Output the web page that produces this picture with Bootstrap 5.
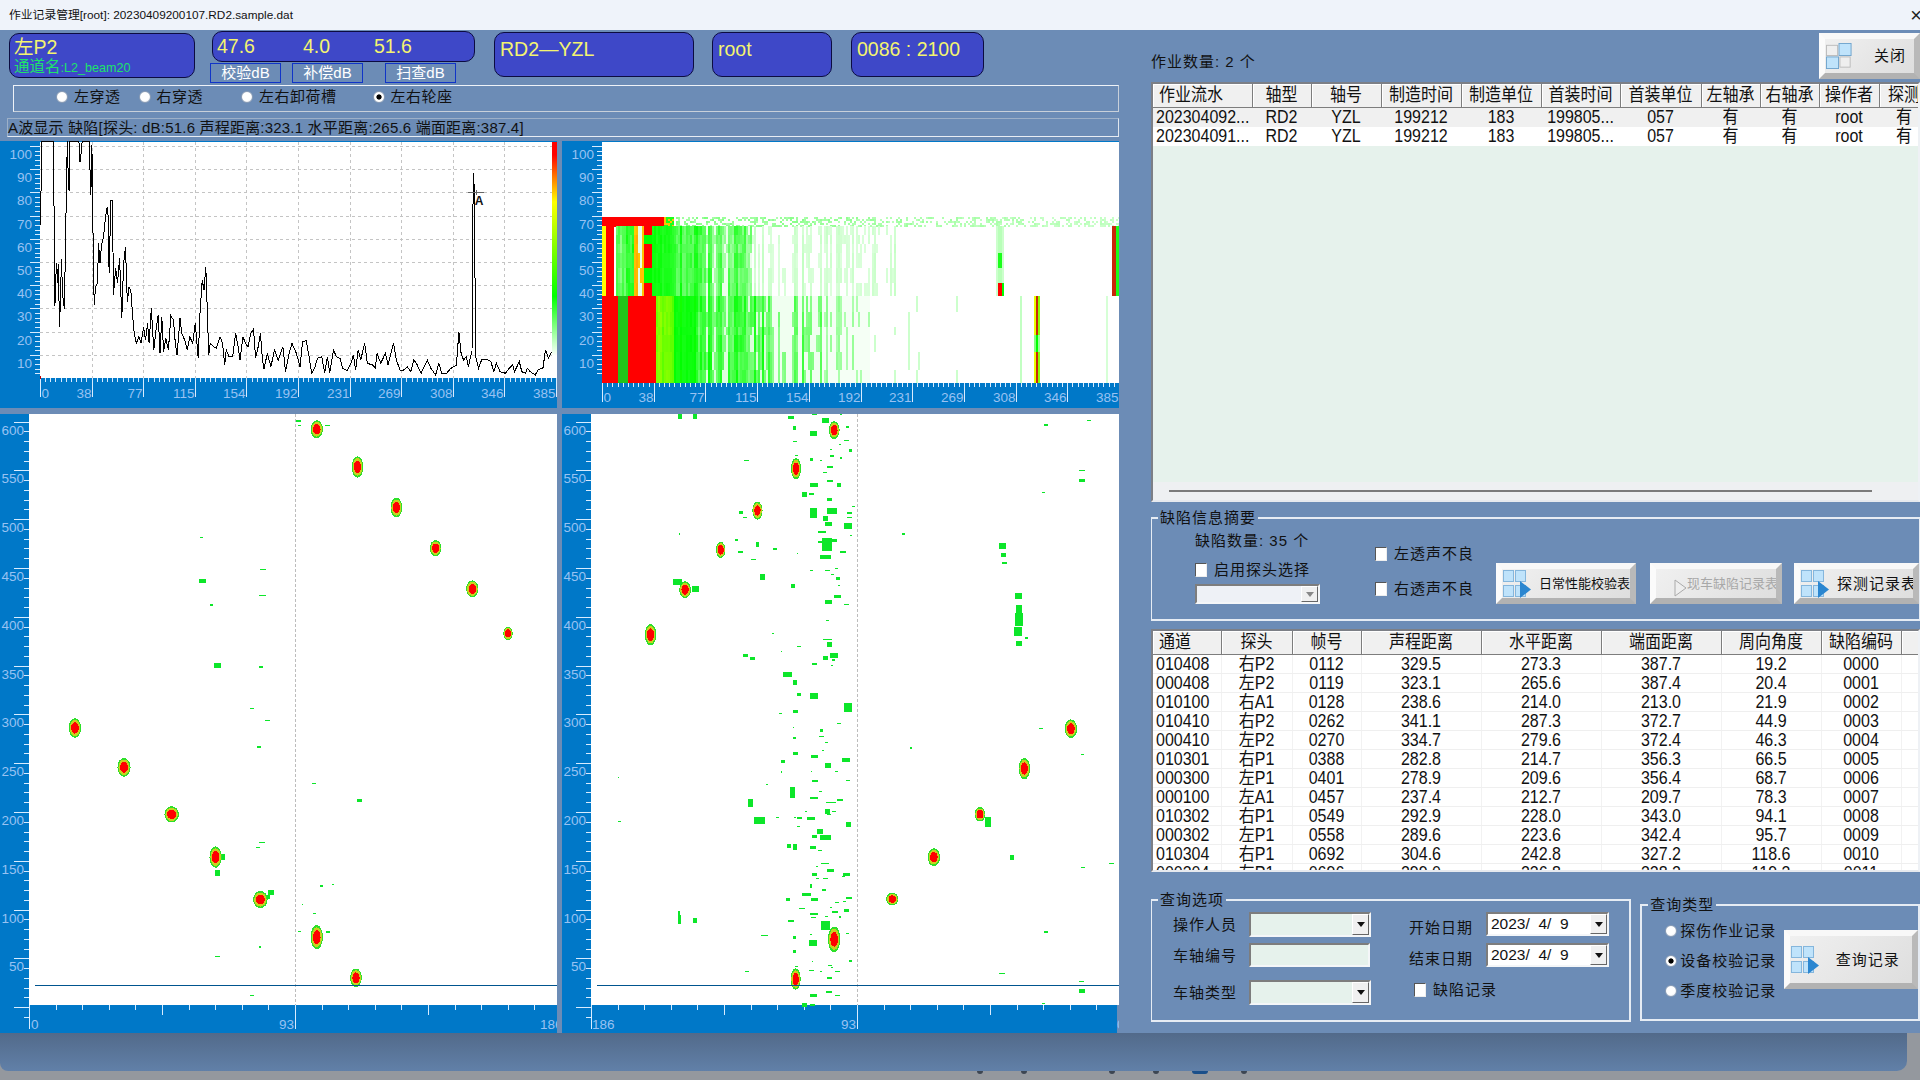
<!DOCTYPE html>
<html lang="zh-CN"><head>
    <meta charset="UTF-8">
    <title>作业记录管理[root]: 20230409200107.RD2.sample.dat</title>
    <link href="https://cdn.jsdelivr.net/npm/bootstrap@5.3.2/dist/css/bootstrap.min.css" rel="stylesheet">
    <style>
        html, body { height: 100%; overflow: hidden; }
        body { margin: 0; background: #94989e; color: #111; font-family: "Liberation Sans", "Noto Sans CJK SC", sans-serif; font-size: 15px; line-height: 1.2; }
        .cn { letter-spacing: 1px; }
        .win-title { height: 30px; background: #eff3fa; font-size: 11.8px; padding-left: 9px; }
        .win-x { margin-right: -2px; font-size: 20px; color: #222; }
        .win-body { height: 1003px; background: #6c8cb6; }
        .win-foot { height: 38px; width: 1907px; background: linear-gradient(#526a8a, #6180a8); border-radius: 0 0 10px 8px; }
        .task-strip { height: 9px; padding-left: 977px; gap: 38px; }
        .task-dot { width: 6px; height: 3px; background: #3d4652; border-radius: 0 0 3px 3px; }
        .task-dot.on { width: 16px; margin: 0 -5px; background: #1a4f8a; }

        .left-pane { width: 1119px; }
        .right-pane { width: 769px; margin-left: 32px; flex: 1 0 auto; overflow: hidden; }

        .head-row { height: 55px; }
        .lcd { background: #3e48c8; border: 1px solid #0c0c40; border-radius: 10px; color: #f4f470; font-size: 19.5px; line-height: 1; }
        .lcd-probe { width: 186px; height: 45px; margin: 3px 0 0 9px; padding: 4px 4px; }
        .lcd-probe small { display: block; font-size: 15.5px; color: #1de36a; margin-top: 1px; }
        .lcd-probe small span { font-size: 12.6px; }
        .db-col { width: 265px; margin: 1px 0 0 15px; }
        .lcd-db { width: 263px; height: 31px; margin-left: 2px; padding: 5px 4px; }
        .lcd-db span { display: inline-block; }
        .db-a { width: 86px; }
        .db-b { width: 71px; }
        .db-btn { width: 71px; height: 20px; margin-top: 1px; border: 1px solid #1034c8; color: #fff; font-size: 15px; line-height: 18px; text-align: center; }
        .db-btn + .db-btn { margin-left: 11px; }
        .db-btn:last-child { margin-left: 22px; }
        .lcd-wide { height: 45px; margin-top: 2px; padding: 7px 5px; }
        .lcd-rd { width: 200px; margin-left: 19px; }
        .lcd-user { width: 120px; margin-left: 18px; }
        .lcd-time { width: 133px; margin-left: 19px; }

        .radio-bar { height: 27px; margin-left: 13px; padding: 0 0 3px 42px; letter-spacing: .5px; border: 1px solid; border-color: #eef2f8 #c8d0da #c8d0da #eef2f8; }
        .radio-bar label { display: flex; align-items: center; gap: 6px; }
        .rb-2 { margin-left: 18px; }
        .rb-3 { margin-left: 38px; }
        .rb-4 { margin-left: 36px; }
        .wave-title { height: 19px; margin: 6px 0 0 7px; border: 1px solid; border-color: #9db0c8 #e0e6ee #e8edf4 #9db0c8; line-height: 17px; white-space: nowrap; letter-spacing: .2px; }
        .scan-svg { display: block; width: 557px; }
        .scan-top { height: 267px; margin-top: 4px; }
        .scan-low { height: 619px; margin-top: 6px; }
        .scan-top, .scan-low { gap: 5px; }
        .scan-svg text { font-family: "Liberation Sans", sans-serif; font-size: 13.5px; fill: #98c2f2; }
        .scan-svg .peak-tag { font-size: 12px; font-weight: 700; fill: #111; }

        .w-radio, .w-check { appearance: none; flex: none; margin: 0; }
        .w-radio { width: 12px; height: 12px; border-radius: 50%; background: radial-gradient(circle at 45% 40%, #fff 55%, #cfd6e0); border: 1px solid #8b9db5; }
        .w-radio:checked { background: radial-gradient(circle, #000 2.2px, #fff 3px); }
        .w-check { width: 12px; height: 14px; background: #fff; border: 1px solid; border-color: #555 #eee #eee #555; }

        .job-head { height: 52px; }
        .job-count { padding-bottom: 11px; }
        .bevel { display: flex; align-items: center; padding: 0; border-width: 6px; border-style: solid; border-color: #f8f8f8 #b9b9b9 #b2b2b2 #fbfbfb; border-radius: 0; background: linear-gradient(135deg, #f0f0f0, #dedede); color: #111; font-size: 13px; white-space: nowrap; overflow: hidden; }
        .bevel-close { width: 101px; height: 46px; margin-top: 3px; font-size: 15px; letter-spacing: 1px; }
        .bevel-close svg { margin-right: 21px; }
        .list-box { border: 2px solid; border-color: #7c7f86 #eef1f5 #e6e9ee #7c7f86; overflow: hidden; }
        .job-box { height: 420px; background: #e6f2ec; }
        .job-rest { flex: 1 1 auto; }
        .job-scroll { height: 18px; background: #eef0f2; padding: 0 46px 0 16px; }
        .job-scroll i { display: block; width: 100%; height: 2px; background: #7b7b7b; }
        .flaw-box { height: 243px; margin-top: 8px; background: #fff; }

        .table.rec-table { table-layout: fixed; margin: 0; font-size: 16px; }
        .rec-table > :not(caption) > * > * { padding: 0 1px; border: 0; text-align: center; white-space: nowrap; overflow: hidden; vertical-align: middle; box-shadow: none; color: #111; line-height: 18px; }
        .rec-table thead th { height: 23px; background: #f0f0f0; font-weight: 400; border-right: 1px solid #7d7d7d; border-bottom: 1px solid #7d7d7d; box-shadow: inset 1px 1px 0 #fff; }
        .rec-table td { height: 19px; background: #fff; border-bottom: 1px solid #efefef; border-right: 1px solid #f2f2f2; }
        .rec-table td:first-child { text-align: left; padding-left: 3px; }
        .rec-table th:first-child { text-align: left; padding-left: 6px; }
        .rec-table td > span, .rec-table th > span { display: inline-block; transform: scaleY(1.12); }
        .job-table tbody tr:first-child td { background: #f0f0f0; }
        .job-table td { height: 19.5px; border: 0; }
        .flaw-table thead th { height: 23px; }

        .w-group { border: 2px solid #e6ecf4; padding: 0; margin: 0; }
        .w-group > legend { float: none; width: auto; font-size: 15px; line-height: 20px; letter-spacing: 1px; margin: 0 0 0 6px; padding: 0 2px; }
        .flaw-group { height: 113px; margin: 6px 0 0 -1px; width: 771px; }
        .flaw-a { width: 180px; padding: 4px 0 0 43px; box-sizing: content-box; }
        .flaw-b { width: 121px; padding-top: 16px; }
        .flaw-row { height: 20px; }
        .flaw-b .flaw-row + .flaw-row { margin-top: 15px; }
        .cbox { gap: 7px; }
        .flaw-btns { padding-top: 35px; }
        .bevel-daily { width: 140px; height: 41px; }
        .bevel-car { width: 132px; height: 41px; margin-left: 14px; color: #a8a8a8; }
        .bevel-probe { width: 125px; height: 41px; margin-left: 12px; font-size: 15px; letter-spacing: 1px; }
        .bevel svg { flex: none; }
        .ic-daily { margin: 0 8px 0 1px; }
        .ic-car { margin: 8px 0 0 18px; }
        .ic-probe { margin: 0 8px 0 1px; }

        .w-combo { display: flex; height: 25px; width: 122px; background: #e6f2ec; border: 2px solid; border-color: #7d7d7d #f4f6f8 #f4f6f8 #7d7d7d; }
        .w-combo i { display: flex; align-items: center; justify-content: center; flex: none; width: 17px; margin-left: auto; background: #f0f0f0; border: 1px solid; border-color: #fff #666 #666 #fff; }
        .w-combo i::after { content: ""; border: 4px solid transparent; border-top: 5px solid #111; border-bottom: 0; }
        .w-combo.off { width: 125px; height: 20px; background: #eef1f6; }
        .w-combo.off i::after { border-top-color: #888; }
        .w-combo.plain { height: 24px; width: 121px; }
        .w-combo.date { width: 123px; height: 24px; background: #fff; font-size: 15.5px; letter-spacing: 0; padding-left: 3px; line-height: 19px; white-space: pre; }

        .query-row { margin: 18px 0 0 -1px; }
        .query-group { width: 482px; height: 132px; }
        .query-grid { display: grid; grid-template-columns: 76px 122px 38px 77px 123px; grid-template-rows: 31px 37px 24px; padding: 2px 0 0 21px; }
        .query-label { padding-top: 4px; }
        .query-label.date-label { padding-top: 7px; }
        .query-chk { grid-column: 4 / span 2; gap: 7px; padding: 0 0 0 5px; height: 20px; }
        .type-group { width: 280px; height: 126px; margin: 5px 0 0 9px; }
        .type-list { width: 142px; padding: 6px 0 0 23px; }
        .type-list label { display: flex; align-items: center; gap: 3px; height: 20px; white-space: nowrap; }
        .type-list label + label { margin-top: 10px; }
        .bevel-query { width: 135px; height: 59px; margin-top: 15px; font-size: 15px; letter-spacing: 1px; }
        .ic-query { margin: 0 17px 0 1px; }
    </style>
</head><body>
    <svg width="0" height="0" class="position-absolute">
        <symbol id="ic-squares" viewBox="0 0 28 28">
            <g fill="#bfe3fb" stroke="#85b6dc"><rect x=".5" y=".5" width="10" height="11"/><rect x="12.5" y=".5" width="10" height="11"/><rect x=".5" y="15.5" width="10" height="11"/><rect x="12.5" y="15.5" width="10" height="11"/></g>
            <path d="M17 11 28 19.5 17 28Z" fill="#2b86d0"/>
        </symbol>
        <symbol id="ic-close" viewBox="0 0 28 28">
            <rect x=".5" y="2.5" width="12" height="11" fill="#efefef" stroke="#bbb"/><rect x="14" y=".5" width="13" height="13" fill="#bfe3fb" stroke="#6ea3cc"/>
            <rect x=".5" y="15" width="13" height="12.5" fill="#bfe3fb" stroke="#6ea3cc"/><rect x="15" y="15" width="11" height="11" fill="#efefef" stroke="#bbb"/>
        </symbol>
    </svg>

    <!-- title bar -->
    <div class="win-title d-flex align-items-center justify-content-between overflow-hidden">
        <span>作业记录管理[root]: 20230409200107.RD2.sample.dat</span>
        <span class="win-x">×</span>
    </div>

    <div class="win-body d-flex">
        <!-- left side : status boxes and scans -->
        <div class="left-pane">
            <div class="head-row d-flex align-items-start">
                <div class="lcd lcd-probe">左P2<small>通道名<span>:L2_beam20</span></small></div>
                <div class="db-col">
                    <div class="lcd lcd-db"><span class="db-a">47.6</span><span class="db-b">4.0</span><span>51.6</span></div>
                    <div class="d-flex">
                        <div class="db-btn">校验dB</div>
                        <div class="db-btn">补偿dB</div>
                        <div class="db-btn">扫查dB</div>
                    </div>
                </div>
                <div class="lcd lcd-wide lcd-rd">RD2—YZL</div>
                <div class="lcd lcd-wide lcd-user">root</div>
                <div class="lcd lcd-wide lcd-time">0086 : 2100</div>
            </div>
            <div class="radio-bar d-flex align-items-center">
                <label><input class="w-radio" type="radio" name="view">左穿透</label>
                <label class="rb-2"><input class="w-radio" type="radio" name="view">右穿透</label>
                <label class="rb-3"><input class="w-radio" type="radio" name="view">左右卸荷槽</label>
                <label class="rb-4"><input class="w-radio" type="radio" name="view" checked>左右轮座</label>
            </div>
            <div class="wave-title">A波显示 缺陷[探头: dB:51.6 声程距离:323.1 水平距离:265.6 端面距离:387.4]</div>
            <div class="scan-top d-flex">
                <svg id="scanA" class="scan-svg" viewBox="0 141 557 267" height="267" shape-rendering="crispEdges"></svg>
                <svg id="scanB" class="scan-svg" viewBox="562 141 557 267" height="267" shape-rendering="crispEdges"></svg>
            </div>
            <div class="scan-low d-flex">
                <svg id="scanL" class="scan-svg" viewBox="0 414 557 619" height="619" shape-rendering="crispEdges"></svg>
                <svg id="scanR" class="scan-svg" viewBox="562 414 557 619" height="619" shape-rendering="crispEdges"></svg>
            </div>
        </div>

        <!-- right side : job list, flaw list, query -->
        <div class="right-pane">
            <div class="job-head d-flex justify-content-between align-items-end">
                <span class="job-count cn">作业数量: 2 个</span>
                <button class="bevel bevel-close align-self-start"><svg width="28" height="26"><use href="#ic-close"/></svg>关闭</button>
            </div>
            <div class="list-box job-box d-flex flex-column">
                <table class="table rec-table job-table" id="jobTable"></table>
                <div class="job-rest"></div>
                <div class="job-scroll d-flex align-items-center"><i></i></div>
            </div>

            <fieldset class="w-group flaw-group">
                <legend>缺陷信息摘要</legend>
                <div class="d-flex">
                    <div class="flaw-a cn">
                        <div class="flaw-row">缺陷数量: 35 个</div>
                        <label class="flaw-row cbox d-flex align-items-center mt-2"><input class="w-check" type="checkbox">启用探头选择</label>
                        <div class="w-combo off mt-1"><i></i></div>
                    </div>
                    <div class="flaw-b cn">
                        <label class="flaw-row cbox d-flex align-items-center"><input class="w-check" type="checkbox">左透声不良</label>
                        <label class="flaw-row cbox d-flex align-items-center"><input class="w-check" type="checkbox">右透声不良</label>
                    </div>
                    <div class="d-flex flaw-btns">
                        <button class="bevel bevel-daily"><svg class="ic-daily" width="28" height="28"><use href="#ic-squares"/></svg>日常性能校验表</button>
                        <button class="bevel bevel-car"><svg class="ic-car" width="13" height="18"><path d="M1 1 12 9 1 17Z" fill="#eee" stroke="#aaa"/></svg>现车缺陷记录表</button>
                        <button class="bevel bevel-probe"><svg class="ic-probe" width="28" height="28"><use href="#ic-squares"/></svg>探测记录表</button>
                    </div>
                </div>
            </fieldset>
            <div class="list-box flaw-box">
                <table class="table rec-table flaw-table" id="flawTable"></table>
            </div>

            <div class="query-row d-flex align-items-start">
                <fieldset class="w-group query-group">
                    <legend>查询选项</legend>
                    <div class="query-grid cn">
                        <span class="query-label">操作人员</span><div class="w-combo"><i></i></div><span></span>
                        <span class="query-label date-label">开始日期</span><div class="w-combo date">2023/  4/  9<i></i></div>
                        <span class="query-label">车轴编号</span><div class="w-combo plain"></div><span></span>
                        <span class="query-label date-label">结束日期</span><div class="w-combo date">2023/  4/  9<i></i></div>
                        <span class="query-label">车轴类型</span><div class="w-combo"><i></i></div><span></span>
                        <label class="query-chk d-flex align-items-center"><input class="w-check" type="checkbox">缺陷记录</label>
                    </div>
                </fieldset>
                <fieldset class="w-group type-group">
                    <legend>查询类型</legend>
                    <div class="d-flex">
                        <div class="type-list cn">
                            <label><input class="w-radio" type="radio" name="qtype">探伤作业记录</label>
                            <label><input class="w-radio" type="radio" name="qtype" checked>设备校验记录</label>
                            <label><input class="w-radio" type="radio" name="qtype">季度校验记录</label>
                        </div>
                        <button class="bevel bevel-query"><svg class="ic-query" width="28" height="28"><use href="#ic-squares"/></svg>查询记录</button>
                    </div>
                </fieldset>
            </div>
        </div>
    </div>

    <div class="win-foot"></div>
    <div class="task-strip d-flex">
        <span class="task-dot"></span><span class="task-dot"></span><span class="task-dot invisible"></span><span class="task-dot"></span><span class="task-dot"></span><span class="task-dot on"></span><span class="task-dot"></span>
    </div>

    <script src="https://cdn.jsdelivr.net/npm/bootstrap@5.3.2/dist/js/bootstrap.bundle.min.js"></script>
    <script>
        // tables
        function buildTable(id, widths, heads, rows) {
            const cols = widths.map(w => `<col style="width:${w}px">`).join('');
            const total = widths.reduce((a, b) => a + b, 0);
            const table = document.getElementById(id);
            table.style.width = total + 'px';
            table.innerHTML = `<colgroup>${cols}</colgroup><thead><tr>${heads.map(h => `<th><span>${h}</span></th>`).join('')}</tr></thead>` +
                `<tbody>${rows.map(r => `<tr>${r.map(c => `<td><span>${c}</span></td>`).join('')}</tr>`).join('')}</tbody>`;
        }

        buildTable('jobTable', [99, 59, 70, 80, 80, 79, 81, 59, 59, 60, 50],
            ['作业流水', '轴型', '轴号', '制造时间', '制造单位', '首装时间', '首装单位', '左轴承', '右轴承', '操作者', '探测'],
            [['202304092...', 'RD2', 'YZL', '199212', '183', '199805...', '057', '有', '有', 'root', '有'],
             ['202304091...', 'RD2', 'YZL', '199212', '183', '199805...', '057', '有', '有', 'root', '有']]);

        buildTable('flawTable', [68, 71, 69, 120, 120, 120, 100, 80, 17],
            ['通道', '探头', '帧号', '声程距离', '水平距离', '端面距离', '周向角度', '缺陷编码', ''],
            [['010408', '右P2', '0112', '329.5', '273.3', '387.7', '19.2', '0000', ''],
             ['000408', '左P2', '0119', '323.1', '265.6', '387.4', '20.4', '0001', ''],
             ['010100', '右A1', '0128', '238.6', '214.0', '213.0', '21.9', '0002', ''],
             ['010410', '右P2', '0262', '341.1', '287.3', '372.7', '44.9', '0003', ''],
             ['000410', '左P2', '0270', '334.7', '279.6', '372.4', '46.3', '0004', ''],
             ['010301', '右P1', '0388', '282.8', '214.7', '356.3', '66.5', '0005', ''],
             ['000300', '左P1', '0401', '278.9', '209.6', '356.4', '68.7', '0006', ''],
             ['000100', '左A1', '0457', '237.4', '212.7', '209.7', '78.3', '0007', ''],
             ['010302', '右P1', '0549', '292.9', '228.0', '343.0', '94.1', '0008', ''],
             ['000302', '左P1', '0558', '289.6', '223.6', '342.4', '95.7', '0009', ''],
             ['010304', '右P1', '0692', '304.6', '242.8', '327.2', '118.6', '0010', ''],
             ['000304', '左P1', '0696', '299.0', '236.8', '328.2', '119.3', '0011', '']]);

        // scan drawing helpers
        const AXIS = '#0078c8', TICK = '#d8ecff', GREEN = '#0de62a';
        const rect = (x, y, w, h, fill) => `<rect x="${x}" y="${y}" width="${w}" height="${h}" fill="${fill}"/>`;
        const line = (x1, y1, x2, y2, c, extra = '') => `<line x1="${x1}" y1="${y1}" x2="${x2}" y2="${y2}" stroke="${c}" ${extra}/>`;
        const label = (x, y, t, anchor = 'end') => `<text x="${x}" y="${y}" text-anchor="${anchor}">${t}</text>`;
        const noise = (a, b = 0) => { const s = Math.sin(a * 12.9898 + b * 78.233) * 43758.5453; return s - Math.floor(s); };

        function yAxisTop(right, labelX) {
            let s = '';
            for (let v = 100; v >= 0; v -= 2) {
                const y = Math.round(378 - 2.32 * v) + .5;
                if (v % 10 === 0 && v > 0) {
                    s += line(right - 10, y, right, y, TICK);
                    s += label(labelX, y + 12, v);
                } else if (v > 0) s += line(right - 5, y, right, y, TICK);
            }
            return s;
        }
        function xAxisTop(left, top, step, base, bottom) {
            const names = [0, 38, 77, 115, 154, 192, 231, 269, 308, 346, 385];
            let s = '';
            for (let i = 0; i <= 100; i++) {
                const x = Math.round(left + i * step / 10) + .5;
                const major = i % 10 === 0;
                s += line(x, top, x, major ? bottom : top + 4, TICK);
                if (major) s += names[i / 10] === 0 ? label(x + 1, base, 0, 'start') : label(x - 1, base, names[i / 10]);
            }
            return s;
        }

        // A scan
        const WAVE = [[112,285],[114,33],[147,33],[148,155],[151,528],[155,400],[158,460],[160,402],[164,592],[169,388],[172,490],[177,538],[181,283],[185,33],[188,155],[190,183],[192,33],[217,33],[220,95],[224,60],[226,33],[246,33],[248,150],[250,195],[252,45],[254,100],[256,340],[259,525],[263,470],[268,460],[271,340],[275,400],[279,345],[285,320],[290,260],[295,230],[298,270],[300,430],[305,210],[309,210],[312,495],[318,415],[323,460],[329,385],[335,565],[340,400],[345,352],[350,515],[355,470],[360,485],[365,560],[369,610],[375,640],[382,620],[388,640],[395,590],[400,630],[406,580],[410,640],[416,535],[423,660],[430,590],[435,555],[440,670],[445,560],[450,665],[456,625],[463,660],[470,558],[477,570],[482,640],[487,675],[495,565],[500,610],[508,630],[515,660],[522,620],[530,640],[537,580],[545,685],[550,550],[556,450],[561,480],[566,410],[570,540],[574,675],[578,640],[585,648],[595,655],[605,620],[612,640],[618,705],[622,660],[630,680],[640,680],[648,610],[655,650],[660,690],[668,620],[675,640],[682,650],[690,610],[697,598],[703,685],[710,650],[716,610],[722,690],[726,718],[735,670],[745,710],[755,660],[765,690],[778,650],[785,725],[795,670],[803,640],[815,670],[825,710],[832,635],[842,632],[850,680],[857,730],[865,715],[873,685],[885,680],[893,730],[900,680],[907,728],[917,660],[925,680],[935,685],[942,715],[955,722],[965,700],[972,675],[978,720],[985,660],[992,690],[1003,640],[1010,700],[1025,705],[1032,715],[1037,670],[1047,700],[1060,670],[1067,705],[1082,640],[1090,690],[1100,720],[1110,720],[1120,710],[1130,725],[1138,690],[1145,700],[1158,730],[1175,690],[1185,715],[1198,735],[1207,700],[1215,730],[1228,730],[1240,715],[1255,705],[1262,605],[1268,670],[1275,690],[1282,680],[1288,710],[1296,670],[1298,670],[1300,260],[1303,130],[1305,235],[1308,680],[1316,715],[1325,688],[1340,688],[1350,695],[1358,725],[1365,700],[1375,725],[1390,730],[1400,715],[1410,705],[1415,725],[1428,695],[1435,725],[1445,730],[1450,715],[1458,725],[1472,735],[1480,718],[1493,715],[1500,660],[1508,685],[1517,665]];

        function drawScanA() {
            let s = `<defs><linearGradient id="heat" x1="0" y1="0" x2="0" y2="1"><stop offset="0" stop-color="#f00"/><stop offset=".06" stop-color="#f00"/><stop offset=".28" stop-color="#ff0"/><stop offset=".72" stop-color="#0f0"/><stop offset="1" stop-color="#fff"/></linearGradient></defs>`;
            s += rect(0, 141, 557, 267, AXIS) + rect(40, 142, 512, 236, '#fff');
            s += rect(552, 142, 5, 236, '#fff') + rect(552, 142, 5, 214, 'url(#heat)');
            for (let i = 0; i < 10; i++) { const y = Math.round(146 + i * 23.2) + .5; s += line(40, y, 552, y, '#c4c4c4', 'stroke-dasharray="3 3"'); }
            for (let i = 1; i < 10; i++) { const x = Math.round(40 + i * 51.6) + .5; s += line(x, 142, x, 378, '#c4c4c4', 'stroke-dasharray="3 3"'); }
            s += yAxisTop(40, 32) + xAxisTop(40, 378, 51.6, 398, 397);
            s += rect(40, 376, 1, 3, '#c00000');
            s += `<polyline fill="none" stroke="#000" points="${WAVE.map(p => (p[0] / 2.75).toFixed(1) + ',' + (130 + p[1] / 3).toFixed(1)).join(' ')}"/>`;
            s += line(468, 192.5, 484, 192.5, '#666') + line(476, 190, 476, 195, '#666');
            s += `<text class="peak-tag" x="479" y="205" text-anchor="middle">A</text>`;
            document.getElementById('scanA').innerHTML = s;
        }

        // B scan
        function heat(v) {
            if (v <= .01) return null;
            const mix = (a, b, t) => `rgb(${a.map((c, i) => Math.round(c + (b[i] - c) * t)).join(',')})`;
            if (v < .5) return mix([255, 255, 255], [0, 255, 0], v * 2);
            if (v < .72) return mix([0, 255, 0], [255, 255, 0], (v - .5) / .22);
            if (v < .9) return mix([255, 255, 0], [255, 120, 0], (v - .72) / .18);
            return v < 1 ? '#c8280a' : '#f00';
        }
        function upperBand(x, n, band) {
            if (x < 123) return .72;
            if (x < 140) return 1;
            if (x < 150) return n > .5 ? 1 : 0;
            if (x < 200) return .2 + .28 * n;
            if (x < 212) return .75 + .1 * n;
            if (x < 230) return n > .5 ? .8 : .05;
            if (x < 250) return band % 3 === 1 ? .5 : 1;
            if (x < 310) return .4 + .1 * n;
            if (x < 380) return .22 + .28 * n;
            if (x < 525) return n > .3 ? .05 + .4 * n : .04;
            if (x < 940) return n > .5 ? .02 + .1 * n : .01;
            if (x > 1195 && x < 1203) return .1;
            if (x >= 1203 && x < 1212) return band === 5 ? 1 : (band === 3 ? .45 : .14);
            if (x >= 1212 && x < 1220) return band === 5 ? .5 : .1;
            if (x >= 1518 && x < 1528) return .95;
            if (x >= 1528) return .45;
            return 0;
        }
        function lowerBand(x, n, band) {
            if (x < 155) return 1;
            if (x < 187) return .48;
            if (x < 260) return 1;
            if (x < 310) return .56 + .08 * n;
            if (x < 372) return .44 + .08 * n;
            if (x < 575) return n > .3 ? .14 + .36 * n : .07;
            if (x < 720) return n > .45 ? .34 * n + .05 : .03;
            if (x < 850) return n > .6 ? .25 * n : .02;
            if (x < 1100) return n > .85 ? .1 : 0;
            if (x > 1262 && x < 1270) return .12;
            if (x >= 1300 && x < 1304) return band === 3 ? .25 : .7;
            if (x >= 1304 && x < 1310) return band === 3 ? .5 : .95;
            if (x >= 1310 && x < 1316) return band === 3 ? .2 : .62;
            if (x > 1498 && x < 1505) return .08;
            return 0;
        }
        function drawScanB() {
            let s = rect(562, 141, 557, 267, AXIS) + rect(602, 142, 517, 241, '#fff');
            const upper = [288, 316, 342, 370, 414, 458, 498];
            const lower = [498, 545, 590, 615, 665, 720, 758];
            for (let px = 602; px < 1119; px += 2) {
                const zx = (px - 560) * 2.75;
                for (let r = 0; r < 5; r++) {
                    const n = noise(px, r + 40);
                    const v = zx < 285 ? 1 : zx < 310 ? (n > .6 ? .8 : .45) : (n > .6 ? .03 + .28 * n * (1 - zx / 2400) : 0);
                    const c = heat(v);
                    if (c) s += rect(px, 217 + r * 2, 2, 2, c);
                }
                const base = noise(px);
                for (let b = 0; b < 6; b++) {
                    const n = base * .65 + noise(px, b + 1) * .35;
                    let c = heat(upperBand(zx, n, b));
                    if (c) s += rect(px, 130 + upper[b] / 3, 2, (upper[b + 1] - upper[b]) / 3, c);
                    c = zx >= 155 && zx < 187 ? '#22c41a' : heat(lowerBand(zx, n, b));
                    if (c) s += rect(px, 130 + lower[b] / 3, 2, (lower[b + 1] - lower[b]) / 3, c);
                }
            }
            s += yAxisTop(602, 594) + xAxisTop(602, 383, 51.7, 402, 402);
            document.getElementById('scanB').innerHTML = s;
        }

        // C/D scans, coordinates read in screen pixels through fx, fy
        const fy = y => 410 + y / 2.337;
        function spot(fx, x, y, w, h) {
            const cx = fx(x), cy = fy(y), rx = w / 5.5, ry = h / 4.674;
            return `<ellipse cx="${cx}" cy="${cy}" rx="${rx}" ry="${ry}" fill="#2ee02a"/>` +
                `<ellipse cx="${cx}" cy="${cy}" rx="${rx * .85}" ry="${ry * .82}" fill="#c8d020"/>` +
                `<ellipse cx="${cx}" cy="${cy}" rx="${rx * .62}" ry="${ry * .58}" fill="#f00"/>`;
        }
        function speck(fx, p) { return rect(fx(p[0] - p[2] / 2).toFixed(1), fy(p[1] - p[3] / 2).toFixed(1), Math.max(1, p[2] / 2.75).toFixed(1), Math.max(1, p[3] / 2.337).toFixed(1), GREEN); }

        function drawLow(id, left, plot, right, labelEnd, dash, lineFrom, names, spots, specks) {
            const fx = x => left + x / 2.75;
            let s = rect(left, 414, 557, 619, AXIS) + rect(plot, 414, right - plot, 591, '#fff');
            for (let i = 0; i <= 61; i++) {
                const y = Math.round(421.6 + i * 9.76) + .5;
                if (i % 5 === 0) { s += line(plot - 15, y, plot, y, TICK); if (i < 60) s += label(labelEnd, y + 12, 600 - i * 10); }
                else s += line(plot - 5, y, plot, y, TICK);
            }
            const xs = Math.round((dash - plot) / 10 * 100) / 100;
            for (let i = 0; i <= 20; i++) {
                const x = Math.round(plot + i * xs) + .5;
                s += line(x, 1005, x, i % 10 === 0 ? 1029 : i % 5 === 0 ? 1015 : 1010, TICK);
            }
            s += names;
            s += line(dash + .5, 414, dash + .5, 1005, '#bcbcbc', 'stroke-dasharray="3 2"');
            s += spots.map(p => spot(fx, ...p)).join('') + specks.map(p => speck(fx, p)).join('');
            s += rect(lineFrom, 985, right - lineFrom, 1, '#00558f');
            document.getElementById(id).innerHTML = s;
        }

        const SPOT_L = [[871,45,34,42],[983,133,32,50],[1090,228,32,46],[1198,323,32,38],[1299,418,34,40],[1397,522,26,32],[206,743,34,46],[341,835,36,44],[472,945,40,38],[593,1045,34,50],[716,1144,40,40],[871,1232,34,56],[979,1327,32,44]];
        const SPECK_L = [[820,25,14,4],[823,35,8,2],[900,35,14,2],[554,298,8,3],[723,372,16,2],[557,400,20,10],[722,433,20,2],[582,456,8,4],[598,597,20,10],[717,601,12,4],[693,698,10,2],[736,726,14,2],[712,788,10,4],[863,873,10,2],[988,912,14,7],[720,1010,16,2],[709,1023,10,2],[597,1082,14,12],[745,1128,16,12],[738,1138,10,10],[884,1113,8,4],[915,1108,6,2],[832,1156,2,3],[864,1176,8,2],[823,1218,8,2],[902,1219,10,4],[715,1255,4,3],[598,1278,14,2],[693,1368,10,3],[614,1045,10,14]];
        const SPOT_R = [[754,47,30,42],[649,137,28,50],[543,235,28,42],[442,327,26,38],[344,420,32,40],[249,525,32,50],[1405,745,34,44],[1277,838,32,50],[1155,945,30,34],[1028,1045,34,42],[914,1143,34,30],[754,1237,34,60],[648,1330,28,50]];
        const SPECK_R = [[330,16,10,12],[371,16,10,12],[635,17,14,8],[700,10,12,2],[730,25,18,12],[773,10,4,2],[645,42,8,8],[791,39,8,4],[696,55,20,10],[646,73,10,2],[788,71,14,2],[770,81,4,2],[799,95,8,6],[745,92,4,3],[748,107,10,6],[773,112,6,6],[651,106,8,3],[513,118,12,2],[691,115,8,6],[718,118,6,2],[742,133,16,4],[729,145,10,2],[698,175,20,8],[742,166,18,3],[767,175,10,8],[673,198,14,12],[692,197,14,5],[741,209,14,6],[808,226,8,2],[697,241,20,24],[748,236,26,14],[795,241,14,6],[795,251,14,2],[497,240,12,8],[508,251,12,4],[729,253,14,12],[738,266,18,8],[793,271,22,14],[720,285,22,5],[800,294,8,2],[328,290,4,4],[945,290,8,4],[485,303,8,4],[543,314,8,12],[733,315,28,30],[753,305,16,5],[722,308,24,6],[778,332,16,6],[496,332,12,4],[591,325,10,3],[653,335,4,2],[730,344,32,10],[532,349,14,2],[692,375,8,2],[735,375,12,2],[760,371,6,2],[749,385,10,2],[556,390,14,14],[764,394,12,6],[640,411,12,8],[766,410,6,2],[762,436,20,6],[738,449,18,8],[788,455,14,2],[735,492,10,2],[586,521,6,2],[735,536,24,4],[740,548,14,12],[657,553,10,2],[609,565,4,2],[510,574,12,6],[530,580,14,8],[752,573,22,12],[729,580,14,10],[752,584,6,3],[700,593,14,6],[747,597,6,2],[625,619,24,12],[646,636,12,12],[657,665,12,6],[698,668,20,14],[792,695,20,20],[648,705,14,8],[606,709,10,3],[767,733,12,2],[642,741,3,2],[719,749,8,8],[718,762,14,2],[732,776,8,2],[645,767,8,4],[723,795,4,2],[648,802,14,8],[699,810,20,6],[787,818,22,8],[613,822,12,6],[737,831,16,10],[609,846,3,6],[760,844,6,2],[692,845,4,4],[792,866,12,4],[701,868,14,5],[569,876,6,2],[716,891,10,2],[639,894,16,26],[699,906,22,5],[769,911,16,6],[524,918,16,18],[746,917,28,3],[735,938,12,10],[753,938,12,3],[739,945,10,4],[676,938,6,3],[690,955,22,8],[548,959,30,18],[598,953,8,2],[646,953,8,2],[658,953,14,5],[655,972,8,2],[793,969,14,12],[714,985,16,10],[700,996,14,6],[730,998,30,12],[629,1019,10,8],[646,1021,12,14],[695,1022,18,6],[715,1030,10,3],[729,1060,22,2],[706,1066,4,2],[743,1076,20,8],[700,1086,14,8],[708,1095,10,2],[730,1095,14,4],[788,1085,20,6],[780,1090,8,2],[690,1113,8,10],[726,1122,10,6],[678,1132,24,8],[700,1144,18,8],[627,1144,12,8],[795,1140,16,3],[782,1148,10,2],[762,1151,12,2],[745,1162,6,2],[665,1165,16,3],[756,1173,16,3],[788,1169,14,8],[697,1178,22,3],[698,1186,14,2],[732,1183,8,3],[770,1185,8,3],[635,1194,16,6],[730,1204,24,20],[791,1222,8,2],[645,1232,8,6],[690,1226,4,3],[562,1227,20,2],[696,1245,22,14],[645,1265,8,6],[799,1287,8,4],[694,1288,3,2],[650,1301,8,2],[743,1298,10,2],[692,1309,14,3],[748,1303,8,3],[718,1311,4,2],[763,1311,14,2],[514,1311,12,2],[741,1327,14,3],[696,1368,20,8],[740,1360,16,6],[763,1368,14,2],[672,1390,12,8],[693,1390,14,6],[1336,35,10,4],[1455,24,10,2],[1436,142,16,2],[1436,164,16,8],[1330,193,8,2],[1217,318,18,14],[1219,338,14,10],[1222,357,14,6],[1261,434,18,14],[1262,465,16,20],[1262,490,22,30],[1258,518,22,20],[1262,545,18,12],[1282,532,8,4],[1323,743,10,2],[965,790,4,4],[1437,805,8,2],[1177,963,16,24],[1243,1045,12,12],[1438,1068,10,2],[1516,1059,14,2],[1336,1219,10,5],[1216,1316,16,2],[1434,1335,12,2],[1436,1358,16,10],[1330,1387,8,4],[328,1190,8,22],[371,1193,10,12],[327,1175,3,8],[161,859,2,2],[163,962,8,3],[323,402,26,16],[373,418,18,14]];

        drawScanA();
        drawScanB();
        drawLow('scanL', 0, 29, 557, 24, 295, 35, label(31, 1029, 0, 'start') + label(294, 1029, 93) + label(540, 1029, 186, 'start'), SPOT_L, SPECK_L);
        drawLow('scanR', 560, 591, 1119, 586, 857, 597, label(592, 1029, 186, 'start') + label(856, 1029, 93) + label(1117, 1029, 0, 'start'), SPOT_R, SPECK_R);
    </script>
</body>
</html>
